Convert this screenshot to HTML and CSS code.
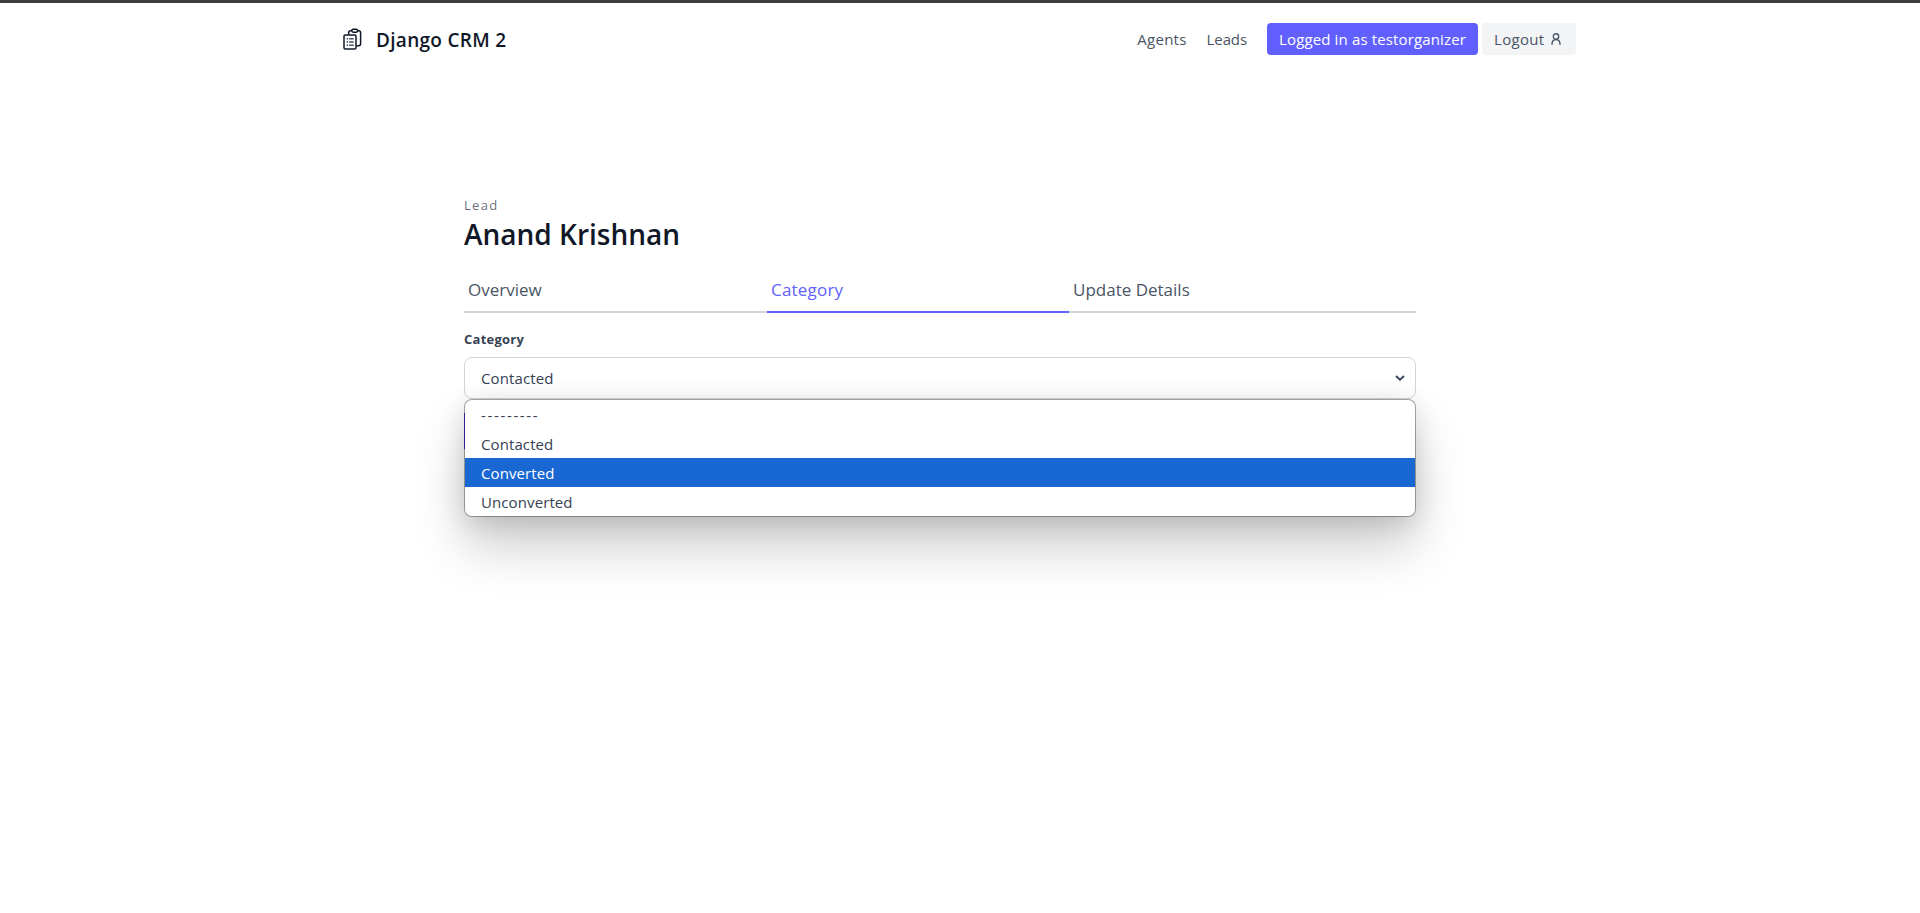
FILE: index.html
```html
<!DOCTYPE html>
<html lang="en">
<head>
<meta charset="utf-8">
<title>Django CRM 2</title>
<link rel="stylesheet" href="styles.css">
</head>
<body>
<header class="header">
  <a class="brand">
    <svg class="brand-icon" viewBox="0 0 19 22" fill="none" stroke="currentColor" stroke-width="1.5" stroke-linejoin="round">
      <path d="M5.7 6.5V4.8Q5.7 2.8 7.7 2.8h1.1M14.5 2.8h1.1q2 0 2 2v11q0 2-2 2h-2.4"/>
      <rect x="8.8" y="1.2" width="5.8" height="3" rx="1.4"/>
      <rect x="1" y="6.9" width="12" height="14.2" rx="1.3"/>
      <path d="M3.6 10.8h1.5M6.1 10.8h4.6M3.6 14h1.5M6.1 14h4.6M3.6 17.2h1.5M6.1 17.2h4.6" stroke-width="1.4" stroke="#4a5565"/>
    </svg>
    <span class="brand-name">Django CRM 2</span>
  </a>
  <nav class="nav">
    <a class="nav-link agents">Agents</a>
    <a class="nav-link leads">Leads</a>
  </nav>
  <a class="button user"><span>Logged in as testorganizer</span></a>
  <a class="button logout"><span>Logout</span>
    <svg class="user-icon" viewBox="0 0 10 12" fill="none" stroke="currentColor" stroke-width="1.4" stroke-linecap="round">
      <circle cx="5" cy="3.5" r="2.7"/>
      <path d="M1 11.2Q1 6.6 5 6.6T9 11.2"/>
    </svg>
  </a>
</header>
<main class="lead">
  <h2 class="eyebrow">Lead</h2>
  <h1 class="name">Anand Krishnan</h1>
  <nav class="tabs">
    <a class="tab">Overview</a>
    <a class="tab active">Category</a>
    <a class="tab">Update Details</a>
  </nav>
  <form class="form">
    <label class="label">Category</label>
    <div class="field">
      <div class="select"><span>Contacted</span>
        <svg class="chevron" viewBox="0 0 10 6" fill="none" stroke="currentColor" stroke-width="1.8"><path d="M1 1l4 3.7L9 1"/></svg>
      </div>
      <ul class="menu">
        <li class="option dashes">---------</li>
        <li class="option">Contacted</li>
        <li class="option selected">Converted</li>
        <li class="option">Unconverted</li>
      </ul>
    </div>
    <div class="submit"></div>
  </form>
</main>
</body>
</html>
```
FILE: styles.css
```css
* { box-sizing: border-box; }
body {
  margin: 0;
  min-height: 913px;
  border-top: 3px solid #3d3b3b;
  background: #fff;
  color: #4a5565;
  font: 15px/24px "Open Sans", "Noto Sans", sans-serif;
}
.header {
  display: flex;
  align-items: center;
  width: 1234px;
  height: 72px;
  margin-left: 342px;
}
.brand { display: flex; align-items: center; color: #101828; }
.brand-icon { width: 19px; height: 22px; margin: 0 14px 0 1px; }
.brand-name { font-size: 19px; font-weight: 600; line-height: 28px; letter-spacing: .3px; padding-top: 1px; }
.nav { display: flex; gap: 20px; margin-left: auto; margin-right: 20px; }
.agents { letter-spacing: .25px; }
.leads { letter-spacing: -.1px; }
.button { display: flex; align-items: center; height: 32px; padding: 0 12px; border-radius: 4px; }
.user { width: 211px; background: #615fff; color: #fff; margin-right: 4px; letter-spacing: .14px; white-space: nowrap; }
.logout { width: 94px; background: #f3f4f6; letter-spacing: .3px; white-space: nowrap; }
.user-icon { width: 10px; height: 12px; margin-left: 7px; flex: none; }
.lead { width: 952px; margin: 122px 0 0 464px; }
.eyebrow { margin: 0; font-size: 13px; font-weight: 400; line-height: 16px; letter-spacing: 1.3px; color: #6a7282; }
.name { margin: 3px 0 17px; font-size: 28px; font-weight: 600; line-height: 36px; letter-spacing: 0; color: #101828; }
.tabs { display: grid; grid-template-columns: 303px 302px 347px; }
.tab { height: 44px; padding: 7px 4px; border-bottom: 2px solid #d1d5dc; font-size: 17px; line-height: 28px; }
.active { color: #615fff; border-color: #615fff; letter-spacing: .2px; }
.form { padding-top: 16px; color: #364153; }
.label { display: block; height: 28px; font-size: 13px; font-weight: 700; line-height: 20px; letter-spacing: .25px; }
.field { position: relative; }
.select {
  display: flex;
  align-items: center;
  justify-content: space-between;
  height: 42px;
  padding: 0 10px 0 16px;
  border: 1px solid #d1d5dc;
  border-radius: 8px;
  letter-spacing: .12px;
}
.chevron { width: 10px; height: 6px; }
.menu {
  position: absolute;
  top: 42px;
  left: 0;
  width: 952px;
  margin: 0;
  padding: 0;
  list-style: none;
  background: #fff;
  background-clip: padding-box;
  border: 1px solid rgba(0, 0, 0, .33);
  border-radius: 8px;
  overflow: hidden;
  box-shadow: 0 30px 50px rgba(0, 0, 0, .2), 0 4px 24px rgba(0, 0, 0, .12);
}
.option { height: 29px; padding: 1px 16px 0; line-height: 29px; letter-spacing: .1px; }
.dashes { letter-spacing: 1.65px; }
.selected { background: #1967d2; color: #fff; }
.submit { width: 90px; height: 36px; margin-top: 14px; background: #4f39f6; }
```
